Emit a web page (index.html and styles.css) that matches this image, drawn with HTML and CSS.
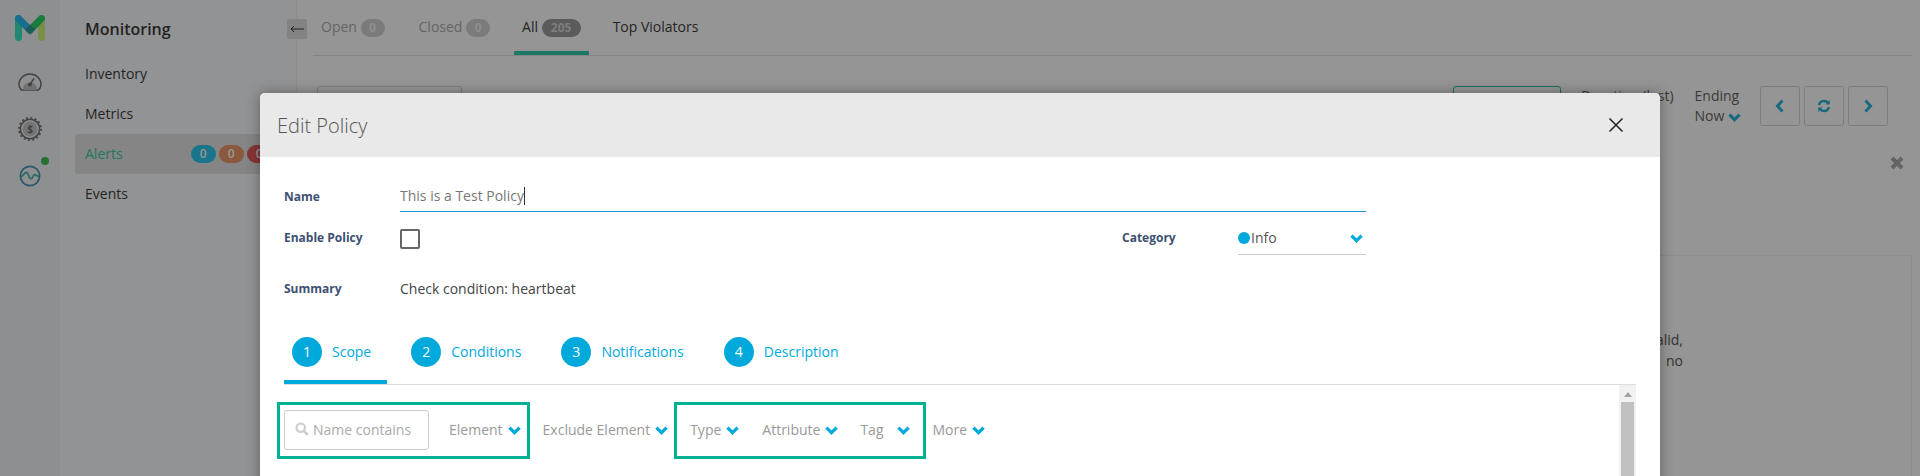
FILE: index.html
```html
<!DOCTYPE html>
<html lang="en">
<head>
<meta charset="utf-8">
<title>Edit Policy</title>
<link rel="stylesheet" href="styles.css">
</head>
<body>
<svg class="defs" width="0" height="0" aria-hidden="true">
  <symbol id="chev" viewBox="0 0 13 9"><path d="M1.400 1.700 6.500 6.700 11.600 1.700" fill="none" stroke="currentColor" stroke-width="3.200"/></symbol>
</svg>
<div class="app">
  <aside class="rail">
    <svg class="logo" width="30" height="26" viewBox="0 0 30 26">
      <path d="M3.500 3.500V22.500" stroke="#10e0b8" stroke-width="7" stroke-linecap="round" fill="none"/>
      <path d="M26.500 3.500V22.500" stroke="#c4f05c" stroke-width="7" stroke-linecap="round" fill="none"/>
      <path d="M3.500 3.500 15 15" stroke="#00aef0" stroke-width="7" stroke-linecap="round" fill="none"/>
      <path d="M26.500 3.500 15 15" stroke="#00c848" stroke-width="7" stroke-linecap="round" fill="none"/>
      <path d="M15 9.500 20 14.500 15 19.500 10 14.500Z" fill="#0a8585"/>
    </svg>
    <svg class="rail-icon gauge" width="24" height="18" viewBox="0 0 24 18">
      <path d="M3.500 17C1.500 15 1 13 1 11.500 1 5.500 6 1 12 1S23 5.500 23 11.500C23 13 22.500 15 20.500 17Z" fill="none" stroke="#555" stroke-width="1.500"/>
      <path d="M6 17C4.500 14 6 11.500 8 10.500 10 9.500 14 9.500 16 10.500 18 11.500 19.500 14 18 17Z" fill="#b4b4b4"/>
      <circle cx="12" cy="11.500" r="2" fill="#555"/>
      <path d="M12 11.500 16 5.500" stroke="#555" stroke-width="1.500"/>
    </svg>
    <svg class="rail-icon gear" width="24" height="24" viewBox="0 0 24 24">
      <circle cx="12" cy="12" r="11.200" fill="none" stroke="#555" stroke-width="1.600" stroke-dasharray="2 2.400"/>
      <circle cx="12" cy="12" r="9.700" fill="none" stroke="#555" stroke-width="1.600"/>
      <circle cx="12" cy="12" r="7.500" fill="#bcbcbc"/>
      <text class="dollar" x="12" y="15.500">$</text>
    </svg>
    <div class="rail-wave">
      <svg width="22" height="22" viewBox="0 0 24 24">
        <circle cx="12" cy="12" r="10.500" fill="none" stroke="#2a7ea8" stroke-width="1.900"/>
        <path d="M1.500 13.500C4 13.500 5.500 8 8 8S10.500 15 13 15 15 10.500 17 10.500 19 12.500 22.500 12.500" fill="none" stroke="#1aa89a" stroke-width="1.900"/>
      </svg>
      <span class="rail-dot"></span>
    </div>
  </aside>

  <nav class="nav">
    <h2 class="nav-title">Monitoring</h2>
    <a class="nav-item">Inventory</a>
    <a class="nav-item">Metrics</a>
    <a class="nav-item active">Alerts
      <span class="counts">
        <span class="count blue">0</span><span class="count orange">0</span><span class="count red">0</span>
      </span>
    </a>
    <a class="nav-item">Events</a>
  </nav>

  <main class="main">
    <button class="collapse"><svg width="14" height="8" viewBox="0 0 14 8"><path d="M14 4H1M4 1 1 4 4 7" fill="none" stroke="#111" stroke-width="1"/></svg></button>
    <div class="tabs">
      <span class="tab dim">Open <b class="pill">0</b></span>
      <span class="tab dim">Closed <b class="pill">0</b></span>
      <span class="tab current">All <b class="pill strong">205</b></span>
      <span class="tab">Top Violators</span>
    </div>
    <div class="toolbar">
      <div class="search-box"></div>
      <div class="toolbar-right">
        <div class="outline-btn"></div>
        <div class="range">Duration (last)</div>
        <div class="range ending">Ending<br>Now <svg class="chev dark" width="13" height="9"><use href="#chev"/></svg></div>
        <div class="pager">
          <span class="page-btn"><svg width="10" height="14" viewBox="0 0 10 14"><path d="M7.500 1.500 2.500 7 7.500 12.500" fill="none" stroke="currentColor" stroke-width="3"/></svg></span>
          <span class="page-btn"><svg width="14" height="14" viewBox="0 0 14 14"><path d="M2 6C2.500 3.500 4.500 2 7 2 8.800 2 10.300 2.800 11.300 4M12 8C11.500 10.500 9.500 12 7 12 5.200 12 3.700 11.200 2.700 10" fill="none" stroke="currentColor" stroke-width="2.400"/><path d="M12.800 1V5.500H8.500ZM1.200 13V8.500H5.500Z" fill="currentColor"/></svg></span>
          <span class="page-btn"><svg width="10" height="14" viewBox="0 0 10 14"><path d="M2.500 1.500 7.500 7 2.500 12.500" fill="none" stroke="currentColor" stroke-width="3"/></svg></span>
        </div>
      </div>
    </div>
    <div class="dismiss-row"><svg width="14" height="14" viewBox="0 0 14 14"><path d="M2 2 12 12M12 2 2 12" stroke="currentColor" stroke-width="4"/></svg></div>
    <section class="card">
      <p class="card-text">The condition evaluates the heartbeat of each element and is valid,<br>when an element stops responding&nbsp;&nbsp;&nbsp;no</p>
    </section>
  </main>

  <div class="backdrop"></div>

  <div class="modal" role="dialog">
    <header class="modal-head">
      <h1 class="modal-title">Edit Policy</h1>
      <svg class="modal-close" width="16" height="16" viewBox="0 0 16 16"><path d="M1.500 1.500 14.500 14.500M14.500 1.500 1.500 14.500" stroke="#222" stroke-width="1.500"/></svg>
    </header>
    <div class="modal-body">
      <div class="row row-name">
        <label class="field-label">Name</label>
        <div class="name-input">This is a Test Policy<span class="caret"></span></div>
      </div>
      <div class="row row-enable">
        <label class="field-label">Enable Policy</label>
        <span class="checkbox"></span>
        <label class="field-label category-label">Category</label>
        <div class="select"><span class="dot"></span><span class="select-text">Info</span><svg class="chev" width="13" height="9"><use href="#chev"/></svg></div>
      </div>
      <div class="row row-summary">
        <label class="field-label">Summary</label>
        <span class="summary-text">Check condition: heartbeat</span>
      </div>
      <div class="steps">
        <div class="step on"><span class="step-num">1</span>Scope</div>
        <div class="step"><span class="step-num">2</span>Conditions</div>
        <div class="step"><span class="step-num">3</span>Notifications</div>
        <div class="step"><span class="step-num">4</span>Description</div>
      </div>
      <div class="scroll-area">
        <div class="scroll-content">
          <div class="filters">
            <div class="name-filter">
              <svg width="14" height="14" viewBox="0 0 13 13"><circle cx="5.300" cy="5.300" r="3.900" fill="none" stroke="#ccc" stroke-width="2"/><path d="M8.200 8.200 12 12" stroke="#ccc" stroke-width="2.400"/></svg>
              <span>Name contains</span>
            </div>
            <span class="filter f-element">Element<svg class="chev" width="13" height="9"><use href="#chev"/></svg></span>
            <span class="filter">Exclude Element<svg class="chev" width="13" height="9"><use href="#chev"/></svg></span>
            <span class="filter f-type">Type<svg class="chev" width="13" height="9"><use href="#chev"/></svg></span>
            <span class="filter">Attribute<svg class="chev" width="13" height="9"><use href="#chev"/></svg></span>
            <span class="filter f-tag">Tag<svg class="chev" width="13" height="9"><use href="#chev"/></svg></span>
            <span class="filter">More<svg class="chev" width="13" height="9"><use href="#chev"/></svg></span>
            <span class="mark mark-a"></span>
            <span class="mark mark-b"></span>
          </div>
        </div>
        <div class="scrollbar">
          <span class="scroll-arrow"></span>
          <span class="scroll-thumb"></span>
        </div>
      </div>
    </div>
  </div>
</div>
</body>
</html>
```

FILE: styles.css
```css
* { box-sizing: border-box; }
html, body { margin: 0; height: 100%; }
body { font-family: "Open Sans", "Liberation Sans", sans-serif; font-size: 14px; color: #111; overflow: hidden; background: #fdfdfd; }
.defs { position: absolute; }
.app { position: relative; display: flex; width: 1920px; height: 476px; overflow: hidden; }

/* left rail */
.rail { width: 60px; flex: none; background: #edf0f4; display: flex; flex-direction: column; align-items: center; padding-top: 15px; }
.logo { display: block; }
.rail-icon { display: block; }
.gauge { margin-top: 32px; }
.gear { margin-top: 26px; }
.dollar { font: 700 10px "Open Sans", sans-serif; fill: #555; text-anchor: middle; }
.rail-wave { position: relative; margin-top: 24px; width: 22px; height: 22px; }
.rail-wave svg { display: block; }
.rail-dot { position: absolute; left: 22px; top: -8px; width: 8px; height: 8px; border-radius: 50%; background: #20b030; }

/* nav */
.nav { width: 237px; flex: none; background: #f7f8fa; border-right: 1px solid #eee; padding-top: 15px; display: flex; flex-direction: column; }
.nav-title { margin: 0 0 11px 25px; font-size: 16px; line-height: 28px; font-weight: 600; color: #111; }
.nav-item { display: flex; align-items: center; height: 40px; margin-left: 15px; padding: 0 0 2px 10px; font-size: 14px; color: #111; border-radius: 4px; }
.nav-item.active { background: #dcdcdc; color: #10bd96; margin-right: 10px; }
.counts { display: flex; gap: 3px; margin: 2px 0 0 68px; }
.count { width: 25px; height: 18px; border-radius: 9px; color: #fff; font-size: 12px; font-weight: 600; line-height: 18px; text-align: center; }
.blue { background: #00bce8; }
.orange { background: #e8824a; }
.red { background: #e03a3a; }

/* main */
.main { position: relative; flex: 1; min-width: 0; padding-right: 8px; }
.collapse { position: absolute; left: -10px; top: 19px; display: flex; align-items: center; justify-content: center; width: 20px; height: 20px; padding: 0; border: 0; border-radius: 2px; background: #d8d8d8; }
.tabs { display: flex; height: 56px; margin-left: 16px; border-bottom: 1px solid #d8d8d8; font-size: 14px; }
.tab { height: 55px; padding: 17px 8px 0; white-space: nowrap; }
.tab.dim { color: #999; margin-right: 18px; }
.tab.dim + .tab.current { margin-left: -2px; }
.tab.current { border-bottom: 4px solid #00c49c; margin-right: 16px; }
.pill { display: inline-block; min-width: 24px; height: 18px; padding: 0 7px; border-radius: 9px; background: #c8c8c8; color: #eee; font-size: 12px; font-weight: 700; line-height: 18px; text-align: center; }
.pill.strong { min-width: 39px; background: #888; color: #ccc; }

.toolbar { display: flex; justify-content: space-between; margin: 30px 24px 0 20px; height: 40px; }
.search-box { width: 145px; height: 40px; border: 1px solid #ccc; border-radius: 3px; }
.toolbar-right { display: flex; }
.outline-btn { width: 108px; height: 40px; border: 1px solid #00b092; border-radius: 3px; margin-right: 20px; }
.range { color: #444; font-size: 14px; line-height: 20px; margin-right: 21px; white-space: nowrap; }
.ending { margin-right: 19px; }
.pager { display: flex; gap: 4px; }
.page-btn { display: flex; align-items: center; justify-content: center; width: 40px; height: 40px; border: 1px solid #ccc; border-radius: 3px; color: #00a5cf; }
.chev { width: 13px; height: 9px; flex: none; color: #00a9dc; }
.chev.dark { color: #00a5cf; vertical-align: -1px; }
.dismiss-row { display: flex; justify-content: flex-end; margin-top: 30px; padding-right: 8px; color: #999; height: 14px; }
.card { height: 300px; margin: 85px 0 0 20px; border: 1px solid #eee; padding: 73px 0 0 0; }
.card-text { margin: 0 228px 0 0; font-size: 14px; line-height: 21px; text-align: right; color: #333; white-space: nowrap; }

/* modal */
.backdrop { position: absolute; inset: 0; background: rgba(49, 49, 49, .51); }
.modal { position: absolute; left: 260px; top: 93px; width: 1400px; height: 500px; background: #fff; border-radius: 5px 5px 0 0; box-shadow: 0 0 14px rgba(0, 0, 0, .35); overflow: hidden; }
.modal-head { display: flex; align-items: center; justify-content: space-between; height: 64px; padding: 0 36px 0 17px; background: #e9e9e9; }
.modal-title { margin: 0; font-size: 20px; font-weight: 300; color: #555; }
.modal-close { display: block; }
.modal-body { padding: 24px 24px 0; }
.row { display: flex; align-items: center; }
.field-label { width: 116px; flex: none; font-size: 12px; font-weight: 700; color: #3c5073; }
.row-name { height: 31px; }
.name-input { width: 966px; height: 31px; border-bottom: 1px solid #1a94dc; color: #777; line-height: 30px; }
.caret { display: inline-block; width: 1px; height: 18px; background: #333; vertical-align: -4px; }
.row-enable { height: 43px; padding-top: 10px; }
.row-enable .field-label { margin-bottom: 3px; }
.checkbox { width: 20px; height: 20px; border: 2px solid #666; border-radius: 2px; flex: none; }
.category-label { margin-left: 702px; width: 116px; }
.select { display: flex; align-items: center; width: 128px; height: 33px; border-bottom: 1px solid #ccc; }
.dot { width: 12px; height: 12px; border-radius: 50%; background: #00a9dc; flex: none; }
.select-text { margin: 0 0 2px 1px; flex: 1; color: #555; }
.select .chev { margin-right: 3px; }
.row-summary { height: 24px; margin-top: 21px; }
.summary-text { color: #444; }
.steps { display: flex; gap: 16px; margin-top: 21px; height: 64px; border-bottom: 1px solid #ddd; }
.step { display: flex; align-items: flex-start; gap: 10px; height: 64px; padding: 16px 16px 0 8px; color: #00a9dc; line-height: 30px; white-space: nowrap; border-bottom: 4px solid transparent; }
.step.on { border-bottom-color: #00a9dc; margin-bottom: -1px; height: 63px; }
.step-num { width: 30px; height: 30px; border-radius: 50%; background: #00a9dc; color: #fff; text-align: center; }
.scroll-area { display: flex; height: 200px; }
.scroll-content { flex: 1; min-width: 0; }
.filters { position: relative; display: flex; align-items: center; margin-top: 25px; height: 40px; color: #999; }
.name-filter { display: flex; align-items: center; gap: 4px; width: 145px; height: 40px; padding: 0 0 2px 10px; border: 1px solid #ccc; border-radius: 3px; color: #aaa; margin-right: 20px; white-space: nowrap; }
.filter { display: flex; align-items: center; gap: 5px; margin-right: 22px; padding-bottom: 2px; white-space: nowrap; }
.filter .chev { margin-top: 2px; }
.f-type { margin-right: 23px; }
.f-tag { gap: 13px; margin-right: 23px; }
.mark { position: absolute; top: -8px; height: 57px; border: 3px solid #00b092; }
.mark-a { left: -7px; width: 253px; }
.mark-b { left: 390px; width: 252px; }
.scrollbar { width: 17px; flex: none; background: #f1f1f1; padding: 0 2px; display: flex; flex-direction: column; align-items: center; }
.scroll-arrow { margin-top: 7px; width: 0; height: 0; border: 4px solid transparent; border-top: 0; border-bottom: 5px solid #a3a3a3; }
.scroll-thumb { margin-top: 5px; width: 13px; flex: 1; background: #c1c1c1; }
```
